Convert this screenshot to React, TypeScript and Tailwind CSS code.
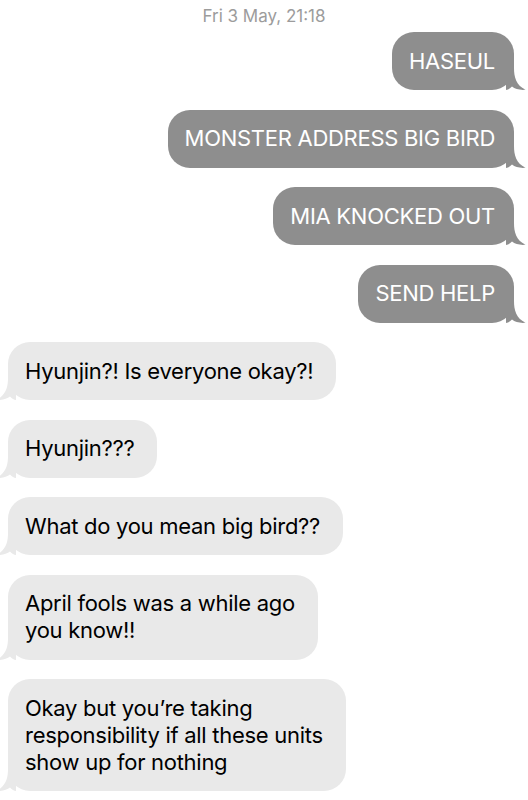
import React from 'react';

type Msg = { text: string[]; from: 'me' | 'them' };

const messages: Msg[] = [
    { text: ['HASEUL'], from: 'me' },
    { text: ['MONSTER ADDRESS BIG BIRD'], from: 'me' },
    { text: ['MIA KNOCKED OUT'], from: 'me' },
    { text: ['SEND HELP'], from: 'me' },
    { text: ['Hyunjin?! Is everyone okay?!'], from: 'them' },
    { text: ['Hyunjin???'], from: 'them' },
    { text: ['What do you mean big bird??'], from: 'them' },
    { text: ['April fools was a while ago', 'you know!!'], from: 'them' },
    { text: ['Okay but you\u2019re taking', 'responsibility if all these units', 'show up for nothing'], from: 'them' },
];

const Tail = ({ side, color }: { side: 'me' | 'them'; color: string }) => (
    <svg
        width="20"
        height="22"
        viewBox="0 0 20 22"
        className={side === 'me' ? 'absolute bottom-0 -right-[12px]' : 'absolute bottom-0 -left-[12px] -scale-x-100'}
    >
        <path d="M0 0 H8 C8 9 10 17 19.5 21.8 C14 22.4 9 21 6 18.6 C4 20.6 2 22 0 22 Z" fill={color} />
    </svg>
);

const Bubble = ({ msg }: { msg: Msg }) => {
    const me = msg.from === 'me';
    const color = me ? '#8e8e8e' : '#e9e9e9';
    return (
        <div
            className={
                me
                    ? 'relative self-end mr-[14px] rounded-[22px] bg-[#8e8e8e] text-white pl-[17px] pr-[19px] py-[15.5px]'
                    : 'relative self-start ml-[8px] rounded-[22px] bg-[#e9e9e9] text-black pl-[17px] pr-[23px] py-[15.5px]'
            }
        >
            {msg.text.map((line, i) => (
                <div key={i} className="text-[22px] leading-[27px] tracking-[-0.28px] whitespace-nowrap">
                    {line}
                </div>
            ))}
            <Tail side={msg.from} color={color} />
        </div>
    );
};

export default function App() {
    return (
        <div className="w-[528px] h-[800px] bg-white overflow-hidden font-['Inter','Liberation_Sans',sans-serif]">
            <div className="pt-[3px] h-[32px] text-center text-[17px] leading-[26px] text-[#9c9c9c]">
                Fri 3 May, 21:18
            </div>
            <div className="flex flex-col gap-[19.5px]">
                {messages.map((m, i) => (
                    <Bubble key={i} msg={m} />
                ))}
            </div>
        </div>
    );
}
